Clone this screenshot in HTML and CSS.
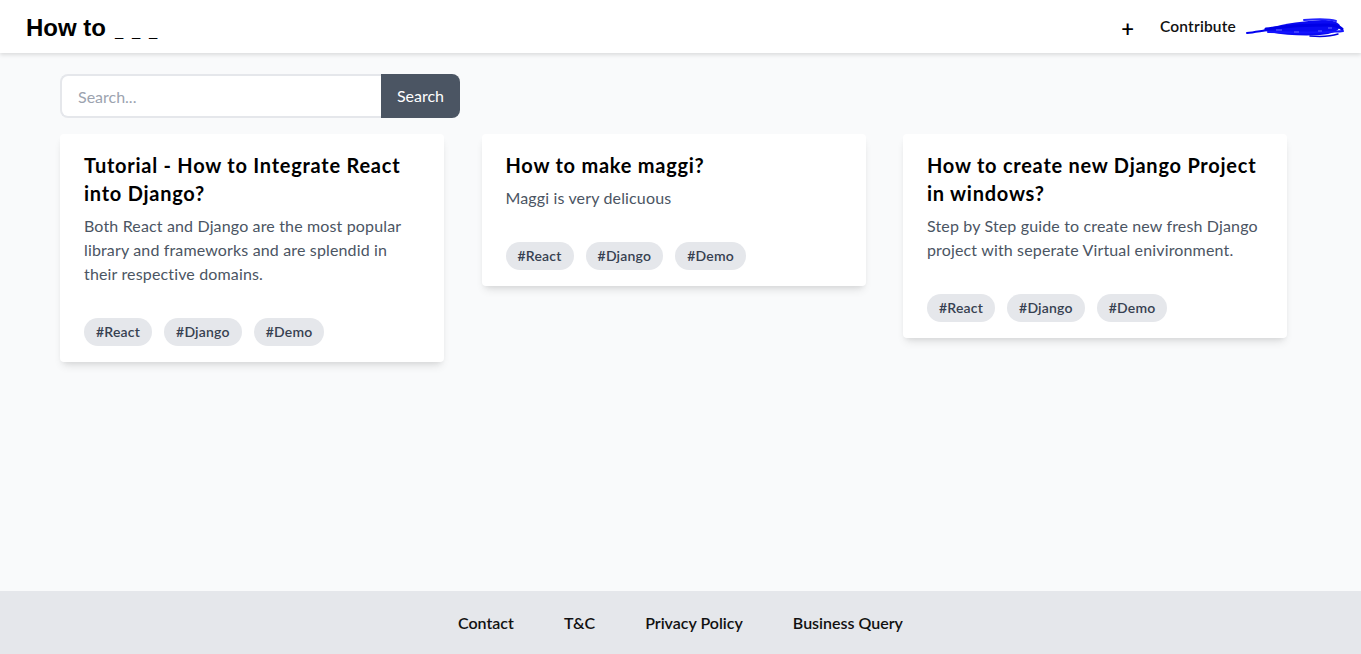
FILE: index.html
```html
<!DOCTYPE html>
<html lang="en">
<head>
<meta charset="utf-8">
<title>How to _ _ _</title>
<link rel="stylesheet" href="styles.css">
</head>
<body>
<header class="topbar">
  <div class="logo">How to <span class="blanks">_ _ _</span></div>
  <nav class="top-nav">
    <a class="plus" href="#">+</a>
    <a class="nav-link" href="#">Contribute</a>
    <svg class="scribble" width="98" height="22" viewBox="0 0 98 22" aria-hidden="true">
      <path d="M1 16 C10 15 20 13 30 12" stroke="#0000f0" stroke-width="2" fill="none" stroke-linecap="round"/>
      <path d="M17 13 C34 7 56 4 76 3 C86 3 93 5 94 9 C93 14 86 17 74 18 C56 19 38 18 23 15 Z" fill="#0a0af2"/>
      <path d="M20 12 C40 9 62 8 82 8 C90 8 94 10 96 12" stroke="#0000e6" stroke-width="3" fill="none" stroke-linecap="round"/>
      <path d="M22 15 C40 15 60 16 80 15 C88 14 92 15 97 14" stroke="#1414ff" stroke-width="2" fill="none" stroke-linecap="round"/>
      <path d="M58 3 C72 2 84 2 90 4" stroke="#2424ff" stroke-width="2" fill="none" stroke-linecap="round"/>
      <path d="M64 19 C76 20 86 19 92 17" stroke="#0000dd" stroke-width="1.5" fill="none" stroke-linecap="round"/>
      <path d="M30 13 l6 0 M48 15 l5 0 M72 14 l4 0 M82 11 l4 0" stroke="#6a6aff" stroke-width="1" fill="none"/>
    </svg>
  </nav>
</header>

<main class="content">
  <form class="search" onsubmit="return false">
    <input class="search-input" type="text" placeholder="Search...">
    <button class="search-btn" type="submit">Search</button>
  </form>

  <section class="cards">
    <article class="card">
      <div class="card-body">
        <h2 class="card-title">Tutorial - How to Integrate React into Django?</h2>
        <p class="card-text">Both React and Django are the most popular library and frameworks and are splendid in their respective domains.</p>
      </div>
      <div class="card-tags">
        <span class="tag">#React</span>
        <span class="tag">#Django</span>
        <span class="tag">#Demo</span>
      </div>
    </article>

    <article class="card">
      <div class="card-body">
        <h2 class="card-title">How to make maggi?</h2>
        <p class="card-text">Maggi is very delicuous</p>
      </div>
      <div class="card-tags">
        <span class="tag">#React</span>
        <span class="tag">#Django</span>
        <span class="tag">#Demo</span>
      </div>
    </article>

    <article class="card">
      <div class="card-body">
        <h2 class="card-title">How to create new Django Project in windows?</h2>
        <p class="card-text">Step by Step guide to create new fresh Django project with seperate Virtual enivironment.</p>
      </div>
      <div class="card-tags">
        <span class="tag">#React</span>
        <span class="tag">#Django</span>
        <span class="tag">#Demo</span>
      </div>
    </article>
  </section>
</main>

<footer class="footer">
  <a href="#">Contact</a>
  <a href="#">T&amp;C</a>
  <a href="#">Privacy Policy</a>
  <a href="#">Business Query</a>
</footer>
</body>
</html>
```

FILE: styles.css
```css
* { box-sizing: border-box; }

html, body { height: 100%; }

body {
  margin: 0;
  background: #f9fafb;
  font-family: "Lato", "Noto Sans", "Liberation Sans", sans-serif;
  color: #111827;
  display: flex;
  flex-direction: column;
}

a { color: inherit; text-decoration: none; }

.topbar {
  height: 53px;
  background: #ffffff;
  box-shadow: 0 2px 4px rgba(0, 0, 0, 0.12);
  display: flex;
  align-items: center;
  justify-content: space-between;
  padding: 0 17px 0 26px;
  position: relative;
  z-index: 1;
}

.logo {
  font-family: "Liberation Sans", Arial, sans-serif;
  font-weight: 700;
  font-size: 24px;
  color: #000;
  padding-top: 2px;
}

.blanks {
  display: inline-block;
  word-spacing: 7.4px;
  margin-left: 2px;
  transform: scaleX(0.62);
  transform-origin: left center;
}

.top-nav {
  display: flex;
  align-items: center;
}

.plus {
  font-size: 22px;
  font-weight: 600;
  color: #000;
  margin-right: 26px;
  line-height: 1;
  padding-top: 4px;
}

.nav-link {
  font-size: 15.5px;
  font-weight: 600;
  letter-spacing: 0.2px;
  color: #111;
  margin-right: 10px;
  padding-bottom: 2px;
}

.scribble { display: block; margin-top: 2px; }

.content {
  flex: 1;
  padding: 21px 0 0 60px;
}

.search {
  display: flex;
  width: 400px;
  height: 44px;
}

.search-input {
  flex: 1;
  min-width: 0;
  border: 2px solid #e5e7eb;
  border-right: none;
  border-radius: 8px 0 0 8px;
  padding: 0 16px;
  font-family: inherit;
  font-size: 16px;
  color: #374151;
  background: #fff;
  outline: none;
}

.search-input::placeholder { color: #9ca3af; }

.search-btn {
  width: 79px;
  border: none;
  border-radius: 0 8px 8px 0;
  background: #4b5563;
  color: #fff;
  font-family: inherit;
  font-size: 16px;
  padding: 0 0 2px;
}

.cards {
  display: grid;
  grid-template-columns: repeat(3, 384px);
  column-gap: 37.5px;
  align-items: start;
  margin-top: 16px;
}

.card {
  background: #fff;
  border-radius: 4px;
  box-shadow: 0 6px 10px -3px rgba(0, 0, 0, 0.12), 0 3px 5px -2px rgba(0, 0, 0, 0.06);
}

.card-body {
  padding: 17px 24px 16px;
}

.card-title {
  margin: 0 0 7px;
  font-size: 20px;
  line-height: 28px;
  font-weight: 700;
  letter-spacing: 0.75px;
  color: #000;
}

.card-text {
  margin: 0;
  font-size: 16px;
  line-height: 24px;
  letter-spacing: 0.15px;
  color: #4b5563;
}

.card-tags {
  padding: 16px 24px 8px;
  display: flex;
  flex-wrap: wrap;
  gap: 0 12px;
}

.tag {
  display: inline-block;
  background: #e5e7eb;
  border-radius: 9999px;
  padding: 0 12px;
  height: 28px;
  line-height: 28px;
  font-size: 14px;
  font-weight: 600;
  letter-spacing: 0.2px;
  color: #374151;
  margin-bottom: 8px;
}

.footer {
  height: 63px;
  background: #e5e7eb;
  display: flex;
  justify-content: center;
  align-items: center;
  gap: 50px;
  font-size: 16px;
  font-weight: 600;
  color: #111;
}
```
